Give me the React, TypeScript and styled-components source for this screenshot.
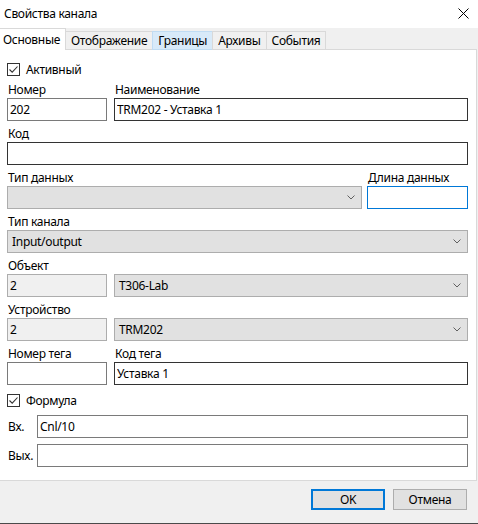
import React from 'react';
import styled, { createGlobalStyle } from 'styled-components';

const GlobalStyle = createGlobalStyle`
  body {
    margin: 0;
    background: #ffffff;
    font-family: "Segoe UI", "Noto Sans", sans-serif;
    font-size: 12px;
    letter-spacing: -0.3px;
    color: #000000;
  }
`;

const tabs = ['Основные', 'Отображение', 'Границы', 'Архивы', 'События'];

const Chevron: React.FC = () => (
  <svg width="8" height="5" viewBox="0 0 8 5">
    <path d="M0.5 0.5 L4 4 L7.5 0.5" fill="none" stroke="#606060" strokeWidth="1" />
  </svg>
);

const CheckMark: React.FC = () => (
  <svg width="11" height="11" viewBox="0 0 11 11">
    <path d="M1.5 5.5 L4.2 8.2 L9.5 2.5" fill="none" stroke="#333333" strokeWidth="1.1" />
  </svg>
);

const Check: React.FC<{ label: string }> = ({ label }) => (
  <CheckRow>
    <CheckBox><CheckMark /></CheckBox>
    <span>{label}</span>
  </CheckRow>
);

const Select: React.FC<{ value?: string }> = ({ value }) => (
  <SelectBox>
    <span>{value}</span>
    <Chevron />
  </SelectBox>
);

const App: React.FC = () => (
  <>
    <GlobalStyle />
    <Window>
      <TitleBar>
        <span>Свойства канала</span>
        <svg width="11" height="11" viewBox="0 0 11 11">
          <path d="M0.5 0.5 L10.5 10.5 M10.5 0.5 L0.5 10.5" stroke="#000" strokeWidth="1" />
        </svg>
      </TitleBar>
      <TabStrip>
        {tabs.map((t, i) => (
          <Tab key={t} $active={i === 0} $hover={i === 2}>{t}</Tab>
        ))}
      </TabStrip>
      <Panel>
        <Check label="Активный" />
        <Row $cols="100px 1fr">
          <Field>
            <Label>Номер</Label>
            <TextBox defaultValue="202" readOnly />
          </Field>
          <Field>
            <Label>Наименование</Label>
            <TextBox $dark defaultValue="TRM202 - Уставка 1" readOnly />
          </Field>
        </Row>
        <Field>
          <Label>Код</Label>
          <TextBox $dark readOnly />
        </Field>
        <Row $cols="1fr 101px" $gap={5}>
          <Field>
            <Label>Тип данных</Label>
            <Select />
          </Field>
          <Field>
            <Label>Длина данных</Label>
            <TextBox $focus readOnly />
          </Field>
        </Row>
        <Field>
          <Label>Тип канала</Label>
          <Select value="Input/output" />
        </Field>
        <Row $cols="100px 1fr">
          <Field>
            <Label>Объект</Label>
            <TextBox $disabled defaultValue="2" readOnly />
          </Field>
          <Field>
            <Label>&nbsp;</Label>
            <Select value="T306-Lab" />
          </Field>
        </Row>
        <Row $cols="100px 1fr">
          <Field>
            <Label>Устройство</Label>
            <TextBox $disabled defaultValue="2" readOnly />
          </Field>
          <Field>
            <Label>&nbsp;</Label>
            <Select value="TRM202" />
          </Field>
        </Row>
        <Row $cols="100px 1fr">
          <Field>
            <Label>Номер тега</Label>
            <TextBox readOnly />
          </Field>
          <Field>
            <Label>Код тега</Label>
            <TextBox $dark defaultValue="Уставка 1" readOnly />
          </Field>
        </Row>
        <FormulaBlock>
          <Check label="Формула" />
          <FormulaRow>
            <span>Вх.</span>
            <TextBox defaultValue="Cnl/10" readOnly />
          </FormulaRow>
          <FormulaRow>
            <span>Вых.</span>
            <TextBox readOnly />
          </FormulaRow>
        </FormulaBlock>
      </Panel>
      <Footer>
        <Button $primary>OK</Button>
        <Button>Отмена</Button>
      </Footer>
    </Window>
  </>
);

const Window = styled.div`
  width: 478px;
  height: 524px;
  box-sizing: border-box;
  display: flex;
  flex-direction: column;
  background: #f0f0f0;
  border-bottom: 1px solid #4a4a4a;
`;

const TitleBar = styled.div`
  height: 28px;
  flex-shrink: 0;
  display: flex;
  align-items: center;
  justify-content: space-between;
  padding: 0 9px 2px 4px;
  background: #ffffff;
  line-height: 15px;
  box-sizing: border-box;
`;

const TabStrip = styled.div`
  height: 22px;
  flex-shrink: 0;
  display: flex;
  align-items: flex-end;
  position: relative;
  z-index: 1;
  margin-bottom: -1px;
`;

const Tab = styled.div<{ $active?: boolean; $hover?: boolean }>`
  box-sizing: border-box;
  height: ${(p) => (p.$active ? '22px' : '19px')};
  padding: ${(p) => (p.$active ? '0 5px 0 3px' : '0 5px')};
  display: flex;
  align-items: center;
  border: 1px solid #d9d9d9;
  border-bottom: ${(p) => (p.$active ? '1px solid #ffffff' : '1px solid #d9d9d9')};
  margin-left: ${(p) => (p.$active ? '0' : '-1px')};
  background: ${(p) => (p.$active ? '#ffffff' : p.$hover ? '#d8eaf9' : '#f0f0f0')};
  border-color: ${(p) => (p.$hover ? '#c0dcf3' : '#d9d9d9')};
  white-space: nowrap;
  &:first-child {
    border-left: none;
    border-bottom-color: #ffffff;
  }
`;

const Panel = styled.div`
  flex: 1;
  display: flex;
  flex-direction: column;
  background: #ffffff;
  border: 1px solid #d9d9d9;
  border-left: none;
  margin-right: 1px;
  padding: 11px 8px 0 7px;
`;

const CheckRow = styled.div`
  height: 16px;
  display: flex;
  align-items: center;
  gap: 6px;
`;

const CheckBox = styled.div`
  width: 13px;
  height: 13px;
  box-sizing: border-box;
  border: 1px solid #333333;
  display: flex;
  align-items: center;
  justify-content: center;
  background: #ffffff;
`;

const Row = styled.div<{ $cols: string; $gap?: number }>`
  display: grid;
  grid-template-columns: ${(p) => p.$cols};
  column-gap: ${(p) => p.$gap ?? 7}px;
`;

const Field = styled.div`
  display: flex;
  flex-direction: column;
  min-width: 0;
`;

const Label = styled.div`
  margin-top: 5px;
  margin-bottom: 1px;
  line-height: 15px;
  height: 15px;
  white-space: nowrap;
  padding-left: 1px;
`;

const TextBox = styled.input<{ $dark?: boolean; $focus?: boolean; $disabled?: boolean }>`
  box-sizing: border-box;
  width: 100%;
  height: 23px;
  margin: 0;
  padding: 0 2px;
  font: inherit;
  letter-spacing: inherit;
  color: #000000;
  outline: none;
  border: 1px solid ${(p) => (p.$focus ? '#0078d7' : p.$dark ? '#333333' : p.$disabled ? '#adadad' : '#7a7a7a')};
  background: ${(p) => (p.$disabled ? '#f0f0f0' : '#ffffff')};
`;

const SelectBox = styled.div`
  box-sizing: border-box;
  height: 23px;
  display: flex;
  align-items: center;
  justify-content: space-between;
  padding: 0 6px 0 4px;
  border: 1px solid #adadad;
  background: #e1e1e1;
`;

const FormulaBlock = styled.div`
  display: flex;
  flex-direction: column;
  gap: 6px;
  margin-top: 7px;
  & > ${CheckRow} {
    margin-bottom: 1px;
  }
`;

const FormulaRow = styled.div`
  display: grid;
  grid-template-columns: 29px 1fr;
  align-items: center;
  padding-left: 1px;
`;

const Footer = styled.div`
  height: 42px;
  flex-shrink: 0;
  display: flex;
  justify-content: flex-end;
  align-items: flex-start;
  gap: 8px;
  padding: 8px 11px 0 0;
  box-sizing: border-box;
`;

const Button = styled.button<{ $primary?: boolean }>`
  width: 74px;
  height: 21px;
  box-sizing: border-box;
  margin: 0;
  padding: 0;
  font: inherit;
  letter-spacing: inherit;
  color: #000000;
  background: #e1e1e1;
  border: ${(p) => (p.$primary ? '2px solid #0078d7' : '1px solid #adadad')};
`;

export default App;
